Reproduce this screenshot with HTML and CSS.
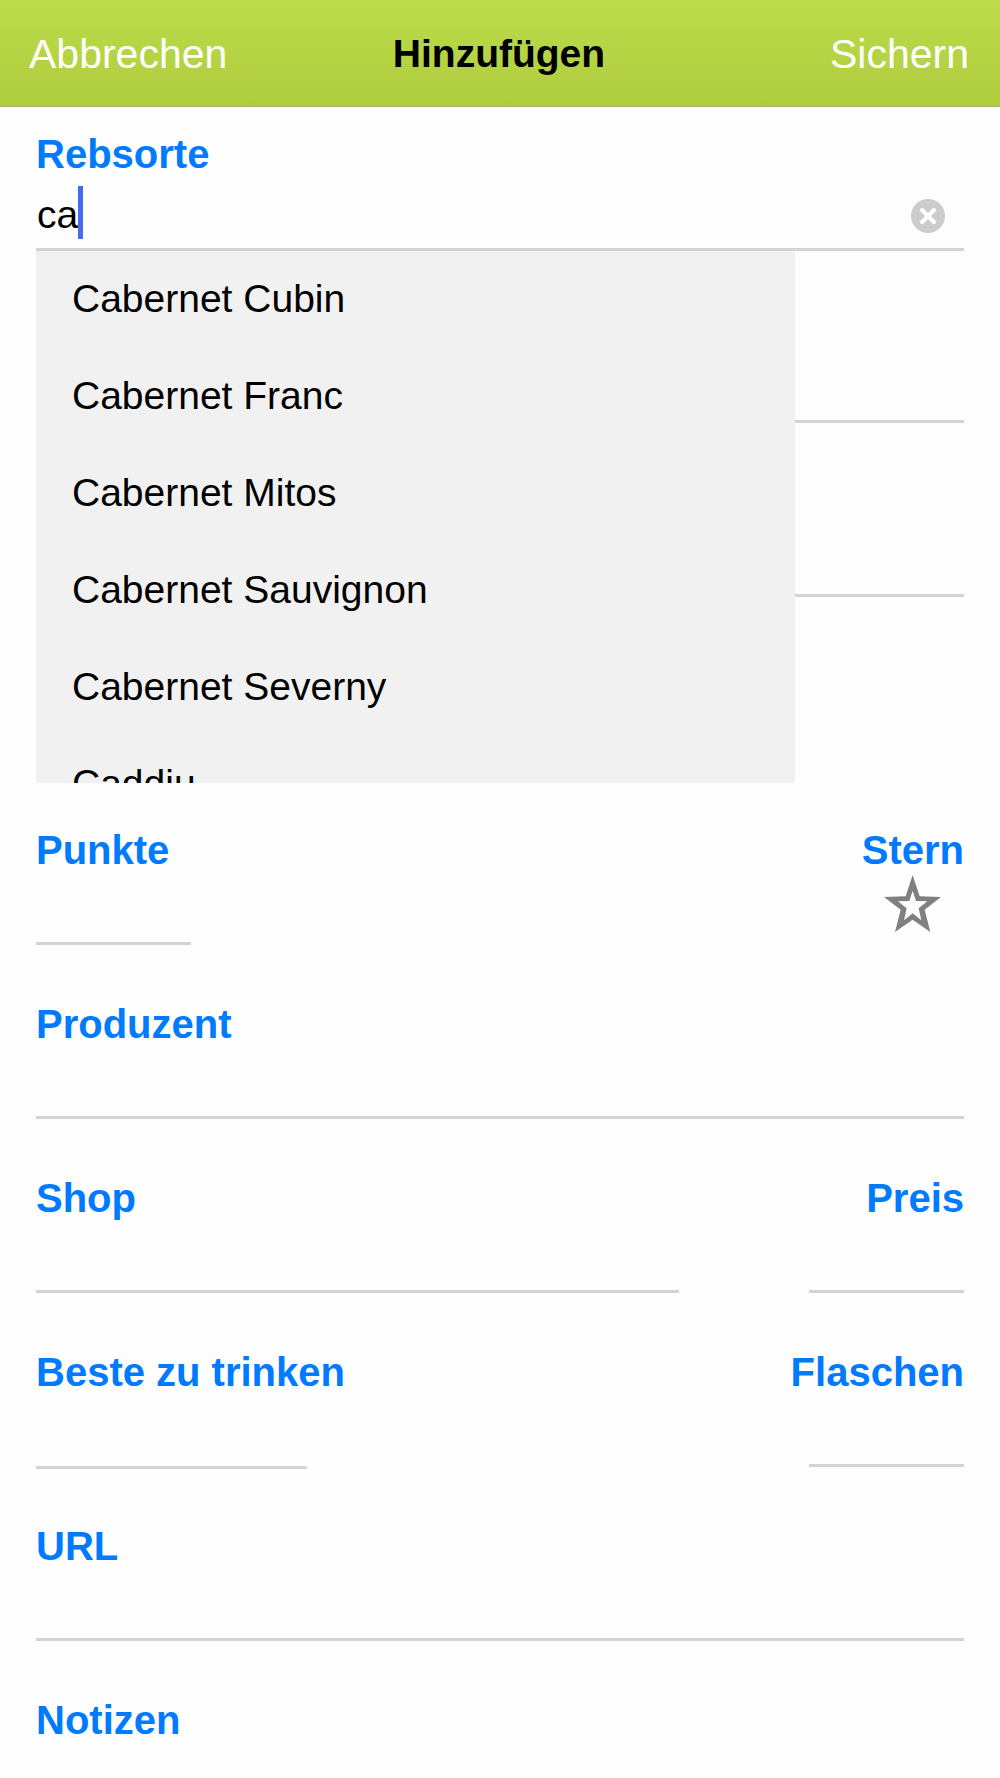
FILE: index.html
```html
<!DOCTYPE html>
<html lang="de">
<head>
  <meta charset="UTF-8">
  <meta name="viewport" content="width=device-width, initial-scale=1">
  <title>Hinzufügen</title>
  <link rel="stylesheet" href="styles.css">
</head>
<body>
  <header class="navbar">
    <button type="button" class="nav-button">Abbrechen</button>
    <h1 class="nav-title">Hinzufügen</h1>
    <button type="submit" form="wine" class="nav-button nav-save">Sichern</button>
  </header>

  <form id="wine" class="form" autocomplete="off">
    <div class="row">
      <div class="field field-wide">
        <label for="grape">Rebsorte</label>
        <div class="search">
          <input id="grape" class="tall" type="text" value="ca">
          <span class="caret"></span>
          <button type="button" class="clear" aria-label="Löschen">
            <svg viewBox="0 0 34 34" width="34" height="34">
              <circle cx="17" cy="17" r="17" fill="#cbcbcb"/>
              <path d="M11 11L23 23M23 11L11 23" stroke="#fff" stroke-width="4" stroke-linecap="round"/>
            </svg>
          </button>
          <!-- suggestions, lies over the next three rows -->
          <ul class="suggestions">
            <li>Cabernet Cubin</li>
            <li>Cabernet Franc</li>
            <li>Cabernet Mitos</li>
            <li>Cabernet Sauvignon</li>
            <li>Cabernet Severny</li>
            <li>Caddiu</li>
          </ul>
        </div>
      </div>
    </div>

    <div class="row">
      <div class="field field-wide unlabeled">
        <input type="text" aria-label="Name">
      </div>
    </div>
    <div class="row">
      <div class="field field-wide unlabeled">
        <input type="text" aria-label="Region">
      </div>
    </div>
    <div class="row">
      <div class="field field-small unlabeled">
        <input type="text" aria-label="Jahrgang">
      </div>
    </div>

    <div class="row">
      <div class="field field-small">
        <label for="points">Punkte</label>
        <input id="points" type="text">
      </div>
      <div class="field field-small field-right">
        <label for="star">Stern</label>
        <button type="button" id="star" class="star">
          <svg viewBox="0 0 171 171" width="57" height="57">
            <path fill="#808080" fill-rule="evenodd" d="M86 0L107 64L171 66L122 104L139 171L86 134L33 171L50 104L0 66L65 64ZM86 47L76 78L42 79L68 100L60 136L86 115L112 136L104 100L130 79L96 78Z"/>
          </svg>
        </button>
      </div>
    </div>

    <div class="row">
      <div class="field field-wide">
        <label for="producer">Produzent</label>
        <input id="producer" type="text">
      </div>
    </div>

    <div class="row">
      <div class="field field-wide">
        <label for="shop">Shop</label>
        <input id="shop" type="text">
      </div>
      <div class="field field-small field-right">
        <label for="price">Preis</label>
        <input id="price" type="text">
      </div>
    </div>

    <div class="row">
      <div class="field field-medium">
        <label for="drink">Beste zu trinken</label>
        <input id="drink" class="tall" type="text">
      </div>
      <div class="field field-small field-right">
        <label for="bottles">Flaschen</label>
        <input id="bottles" type="text">
      </div>
    </div>

    <div class="row">
      <div class="field field-wide">
        <label for="url">URL</label>
        <input id="url" type="url">
      </div>
    </div>

    <div class="row">
      <div class="field field-wide">
        <label for="notes">Notizen</label>
        <textarea id="notes" rows="3"></textarea>
      </div>
    </div>
  </form>
</body>
</html>
```

FILE: styles.css
```css
* {
  box-sizing: border-box;
}

body {
  display: flex;
  flex-direction: column;
  height: 100vh;
  margin: 0;
  background: #fefefe;
  color: #000;
  font-family: "Liberation Sans", Arial, sans-serif;
  font-size: 39px;
}

button, input, textarea {
  margin: 0;
  padding: 0;
  border: 0;
  border-radius: 0;
  outline: none;
  background: none;
  color: inherit;
  font: inherit;
}

/* top bar */
.navbar {
  display: grid;
  grid-template-columns: 1fr auto 1fr;
  align-items: center;
  flex: none;
  height: 107px;
  padding: 2px 31px 0 29px;
  border-bottom: 1px solid #a9b56a;
  background: linear-gradient(#bcdc4a, #afcc3e);
}

.nav-title {
  margin: 0;
  font-size: 39px;
}

.nav-button {
  justify-self: start;
  color: #fff;
  font-size: 41px;
}

.nav-save {
  justify-self: end;
}

/* form */
.form {
  display: grid;
  grid-auto-rows: minmax(174px, auto);
  flex: 1;
  min-height: 0;
  padding: 22px 36px 0;
  overflow-y: auto;
  scrollbar-width: none;
}

.row {
  display: flex;
  justify-content: space-between;
  gap: 130px;
}

.field {
  display: flex;
  flex-direction: column;
}

.field-wide {
  flex: 1;
}

.field-small {
  width: 155px;
}

.field-medium {
  width: 271px;
}

.field-right {
  align-items: flex-end;
}

.unlabeled {
  padding-top: 50px;
}

label {
  color: #007aff;
  font-size: 40px;
  font-weight: bold;
  line-height: 50px;
  white-space: nowrap;
}

input {
  width: 100%;
  height: 70px;
  padding: 2px 1px 0;
  border-bottom: 3px solid #d3d3d3;
}

input.tall {
  height: 72px;
}

textarea {
  width: 100%;
  resize: none;
}

/* grape search */
.search {
  position: relative;
}

.search input {
  display: block;
  padding-right: 60px;
}

.caret {
  position: absolute;
  top: 7px;
  left: 42px;
  width: 5px;
  height: 53px;
  background: #466bf2;
}

.clear {
  position: absolute;
  top: 20px;
  right: 19px;
}

.clear svg, .star svg {
  display: block;
}

.suggestions {
  position: absolute;
  top: 100%;
  left: 0;
  z-index: 1;
  width: calc(100% - 169px);
  height: 532px;
  margin: 0;
  padding: 0 36px;
  overflow: hidden;
  background: #f1f1f1;
  list-style: none;
}

.suggestions li {
  padding-bottom: 2px;
  line-height: 95px;
}

.star {
  display: flex;
  justify-content: center;
  width: 104px;
}
```
